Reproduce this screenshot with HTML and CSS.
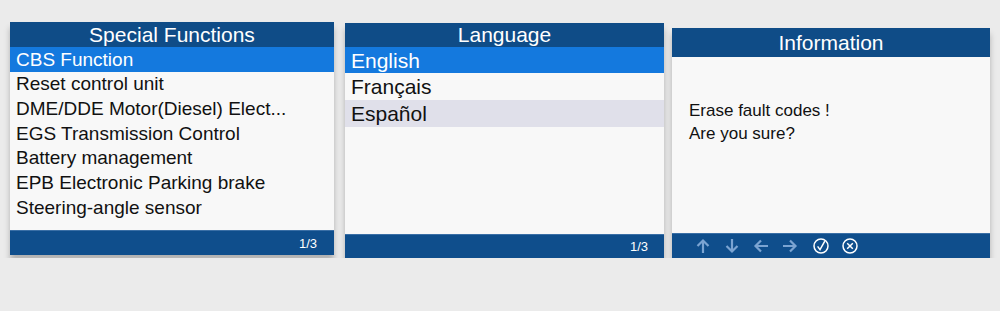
FILE: index.html
```html
<!doctype html>
<html lang="en">

<head>
    <meta charset="utf-8" />
    <meta name="viewport" content="width=device-width, initial-scale=1">
    <title>Scanner screens</title>
    <link rel="stylesheet" href="styles.css">
</head>

<body>
    <div class="screens">
        <section class="screen screen-functions">
            <div class="screen-title">Special Functions</div>
            <ul class="menu">
                <li class="active">CBS Function</li>
                <li>Reset control unit</li>
                <li>DME/DDE Motor(Diesel) Elect...</li>
                <li>EGS Transmission Control</li>
                <li>Battery management</li>
                <li>EPB Electronic Parking brake</li>
                <li>Steering-angle sensor</li>
            </ul>
            <div class="screen-footer">
                <span class="page">1/3</span>
            </div>
        </section>

        <section class="screen screen-language">
            <div class="screen-title">Language</div>
            <ul class="menu">
                <li class="active">English</li>
                <li>Français</li>
                <li class="hover">Español</li>
            </ul>
            <div class="screen-footer">
                <span class="page">1/3</span>
            </div>
        </section>

        <section class="screen screen-info">
            <div class="screen-title">Information</div>
            <div class="message">
                <p>Erase fault codes !</p>
                <p>Are you sure?</p>
            </div>
            <div class="screen-footer keys">
                <svg class="key" viewBox="0 0 16 16" aria-label="Up">
                    <path d="M8 15V2.5M2.5 8L8 2.5 13.5 8" />
                </svg>
                <svg class="key" viewBox="0 0 16 16" aria-label="Down">
                    <path d="M8 1v12.5M2.5 8L8 13.5 13.5 8" />
                </svg>
                <svg class="key" viewBox="0 0 16 16" aria-label="Left">
                    <path d="M15 8H2.5M8 2.5L2.5 8 8 13.5" />
                </svg>
                <svg class="key" viewBox="0 0 16 16" aria-label="Right">
                    <path d="M1 8h12.5M8 2.5L13.5 8 8 13.5" />
                </svg>
                <svg class="key key-round key-ok" viewBox="0 0 16 16" aria-label="OK">
                    <circle cx="8" cy="8" r="7" />
                    <path d="M4.6 8.4L7 11.6 11.8 3.2" />
                </svg>
                <svg class="key key-round" viewBox="0 0 16 16" aria-label="Cancel">
                    <circle cx="8" cy="8" r="7" />
                    <path d="M5.2 5.2l5.6 5.6M10.8 5.2l-5.6 5.6" />
                </svg>
            </div>
        </section>
    </div>
</body>

</html>
```

FILE: styles.css
```css
body {
    margin: 0;
    background-color: #ebebeb;
    font-family: "Liberation Sans", Arial, sans-serif;
    color: #111;
}

.screens {
    display: flex;
    align-items: flex-start;
    padding-left: 10px;
}

.screen {
    display: flex;
    flex-direction: column;
    background: #f8f8f8;
    box-shadow: 0 6px 6px rgba(0, 0, 0, 0.25);
}

.screen-functions {
    width: 324px;
    height: 233px;
    margin-top: 22px;
}

.screen-language {
    width: 319px;
    height: 235px;
    margin-top: 23px;
    margin-left: 11px;
}

.screen-info {
    width: 318px;
    height: 230px;
    margin-top: 28px;
    margin-left: 8px;
}

.screen-title {
    background: #0f4c87;
    color: white;
    text-align: center;
    font-size: 21px;
    height: 25px;
    line-height: 25px;
}

.screen-language .screen-title {
    height: 24px;
    line-height: 24px;
}

.screen-info .screen-title {
    height: 29px;
    line-height: 29px;
}

.menu {
    list-style: none;
    margin: 0;
    padding: 0;
    flex: 1;
}

.menu li {
    padding-left: 6px;
    white-space: nowrap;
}

.screen-functions .menu li {
    font-size: 19px;
    height: 24.8px;
    line-height: 24.8px;
}

.screen-functions .menu li.active {
    height: 25px;
    line-height: 25px;
}

.screen-language .menu li {
    font-size: 21px;
    height: 27px;
    line-height: 27px;
}

.screen-language .menu li:first-child {
    height: 26px;
    line-height: 28px;
}

.menu li.active {
    background: #1479de;
    color: white;
}

.menu li.hover {
    background: #e0e0ea;
}

.message {
    flex: 1;
    padding: 42px 0 0 17px;
    font-size: 17px;
}

.message p {
    margin: 0;
    line-height: 23px;
}

.screen-footer {
    display: flex;
    align-items: center;
    justify-content: flex-end;
    height: 25px;
    padding-right: 17px;
    background: #0f4e8c;
    border-top: 1px solid #3a6fa6;
    box-sizing: border-box;
}

.screen-language .screen-footer {
    height: 24px;
    padding-right: 16px;
}

.page {
    color: white;
    font-size: 13px;
}

.keys {
    justify-content: flex-start;
    gap: 13px;
    padding-left: 23px;
}

.key {
    width: 16px;
    height: 16px;
    fill: none;
    stroke: #7ba4d2;
    stroke-width: 2.2;
}

.key-round {
    stroke: white;
    stroke-width: 1.5;
}

.key-ok {
    margin-left: 2px;
}
```
